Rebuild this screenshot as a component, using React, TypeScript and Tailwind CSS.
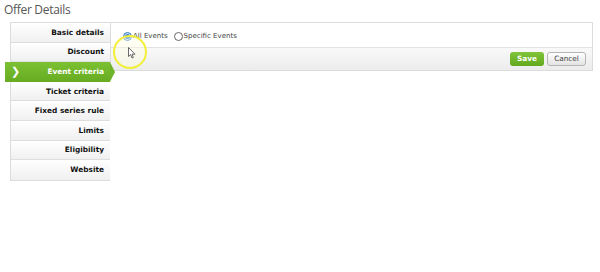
const items = [
  "Basic details",
  "Discount",
  "Event criteria",
  "Ticket criteria",
  "Fixed series rule",
  "Limits",
  "Eligibility",
  "Website",
];

const NavItem = ({ label, active }: { label: string; active: boolean }) => {
  if (active) {
    return (
      <div className="relative -ml-[6px] h-[19.6px] flex items-center bg-gradient-to-b from-[#7cc033] to-[#67ab22] text-white">
        <span className="pl-[6px] text-[11px] font-bold leading-none">❯</span>
        <span className="ml-auto pr-[6px] text-[7.4px] font-bold">{label}</span>
        <div className="absolute right-[-5px] top-0 h-full w-[5px] bg-[#6eb328] [clip-path:polygon(0_0,100%_50%,0_100%)]"></div>
      </div>
    );
  }
  return (
    <div className="h-[19.6px] flex items-center justify-end pr-[6px] border-b border-[#dedede] bg-gradient-to-b from-white to-[#f0f0f0] text-[7.4px] font-bold text-[#111] last:border-b-0">
      {label}
    </div>
  );
};

const Radio = ({ checked }: { checked: boolean }) => (
  <span
    className={
      "inline-flex h-[9px] w-[9px] items-center justify-center rounded-full border " +
      (checked ? "border-[#3a7fc4] bg-[#cfe3f7]" : "border-[#666] bg-white")
    }
  >
    {checked && <span className="h-[5px] w-[5px] rounded-full bg-[#2d7ad6]"></span>}
  </span>
);

export default function App() {
  return (
    <div className="relative w-[600px] h-[272px] bg-white font-['DejaVu_Sans',Verdana,sans-serif] text-[#333]">
      <div className="pl-[4px] pt-[1px] h-[22px] font-['Open_Sans',sans-serif] text-[12px] tracking-[-0.3px] text-[#555]">
        Offer Details
      </div>
      <div className="flex items-start pl-[10px]">
        <div className="w-[100px] border border-[#dcdcdc] border-r-0 flex flex-col">
          {items.map((label) => (
            <NavItem key={label} label={label} active={label === "Event criteria"} />
          ))}
        </div>
        <div className="w-[483px] border border-[#dcdcdc]">
          <div className="h-[24px] flex items-center gap-[1px] pl-[12px] pt-[3px] text-[7px] text-[#444]">
            <Radio checked />
            <span>All Events</span>
            <span className="ml-[4px]"></span>
            <Radio checked={false} />
            <span>Specific Events</span>
          </div>
          <div className="h-[23px] flex items-center justify-end gap-[3px] pr-[6px] border-t border-[#e2e2e2] bg-gradient-to-b from-[#f9f9f9] to-[#ececec]">
            <button className="h-[14px] w-[34px] rounded-[3px] bg-gradient-to-b from-[#80c43a] to-[#62a81d] text-[7.3px] font-bold text-white">
              Save
            </button>
            <button className="h-[14px] w-[39px] rounded-[3px] border border-[#b5b5b5] bg-gradient-to-b from-white to-[#e3e3e3] text-[7.3px] text-[#444]">
              Cancel
            </button>
          </div>
        </div>
      </div>
      <div className="absolute left-[113px] top-[35px] h-[34px] w-[34px] rounded-full border-2 border-[#f2ef3a] bg-[#fffde0]/40"></div>
      <svg className="absolute left-[128px] top-[47px]" width="8" height="12" viewBox="0 0 8 12">
        <path d="M0.5 0.5 L0.5 9.5 L2.6 7.6 L4 11 L5.4 10.4 L4 7.2 L7 7.2 Z" fill="white" stroke="#444" strokeWidth="0.8" />
      </svg>
    </div>
  );
}
